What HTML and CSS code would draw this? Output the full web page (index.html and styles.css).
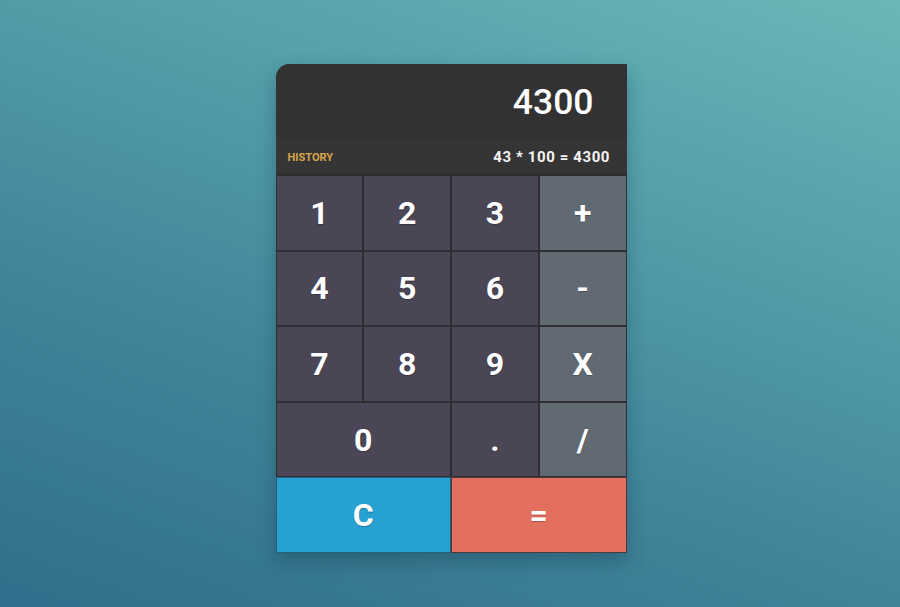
FILE: index.html
```html
<!DOCTYPE html>
<html>
<head>
<meta charset="utf-8">
<link rel="stylesheet" href="styles.css">
</head>
<body>
<div class="calc">
  <div class="display">4300</div>
  <div class="history">
    <span class="history-label">HISTORY</span>
    <span class="history-expr">43 * 100 = 4300</span>
  </div>
  <div class="keys">
    <button class="key num">1</button>
    <button class="key num">2</button>
    <button class="key num">3</button>
    <button class="key op">+</button>
    <button class="key num">4</button>
    <button class="key num">5</button>
    <button class="key num">6</button>
    <button class="key op">-</button>
    <button class="key num">7</button>
    <button class="key num">8</button>
    <button class="key num">9</button>
    <button class="key op">X</button>
    <button class="key num wide">0</button>
    <button class="key num">.</button>
    <button class="key op">/</button>
    <button class="key clear wide">C</button>
    <button class="key equals wide">=</button>
  </div>
</div>
</body>
</html>
```
FILE: styles.css
```css
html, body {
  margin: 0;
  padding: 0;
  height: 100%;
}
body {
  background: linear-gradient(200deg, #6ab7b7 0%, #55a0aa 30%, #3f8499 65%, #2f6f8b 100%);
  font-family: Roboto, "Liberation Sans", sans-serif;
  display: flex;
  justify-content: center;
  align-items: flex-start;
  padding-top: 64px;
  box-sizing: border-box;
  margin-left: 2px;
}
.calc {
  width: 351px;
  border-top-left-radius: 14px;
  overflow: hidden;
  box-shadow: 0 8px 18px rgba(20, 50, 70, 0.35);
  background: #333232;
}
.display {
  height: 76px;
  background: #333232;
  color: #ffffff;
  font-size: 35.5px;
  font-weight: 500;
  text-align: right;
  padding-right: 33px;
  line-height: 76px;
  box-sizing: border-box;
}
.history {
  height: 35px;
  background: #363535;
  display: flex;
  justify-content: space-between;
  align-items: center;
  padding: 0 17px 0 12px;
  border-bottom: 1px solid #2b2a30;
  box-sizing: border-box;
}
.history-label {
  color: #d8a548;
  font-size: 11px;
  font-weight: 700;
}
.history-expr {
  color: #f4f4f4;
  font-size: 15px;
  font-weight: 700;
  letter-spacing: 0.6px;
  margin-right: -0.6px;
}
.keys {
  display: grid;
  grid-template-columns: repeat(4, 1fr);
  grid-auto-rows: 75.6px;
}
.key {
  border: 1px solid #2f2e35;
  margin: 0;
  padding: 0;
  color: #ffffff;
  font-family: Roboto, "Liberation Sans", sans-serif;
  font-size: 32px;
  font-weight: 700;
  text-shadow: 0 1px 1px rgba(0, 0, 0, 0.25);
}
.wide {
  grid-column: span 2;
}
.num {
  background: #4a4655;
}
.op {
  background: #616a72;
}
.clear {
  background: #27a1d1;
  border-color: #23627f;
}
.equals {
  background: #e3705e;
  border-color: #4b3b3e;
}
```
